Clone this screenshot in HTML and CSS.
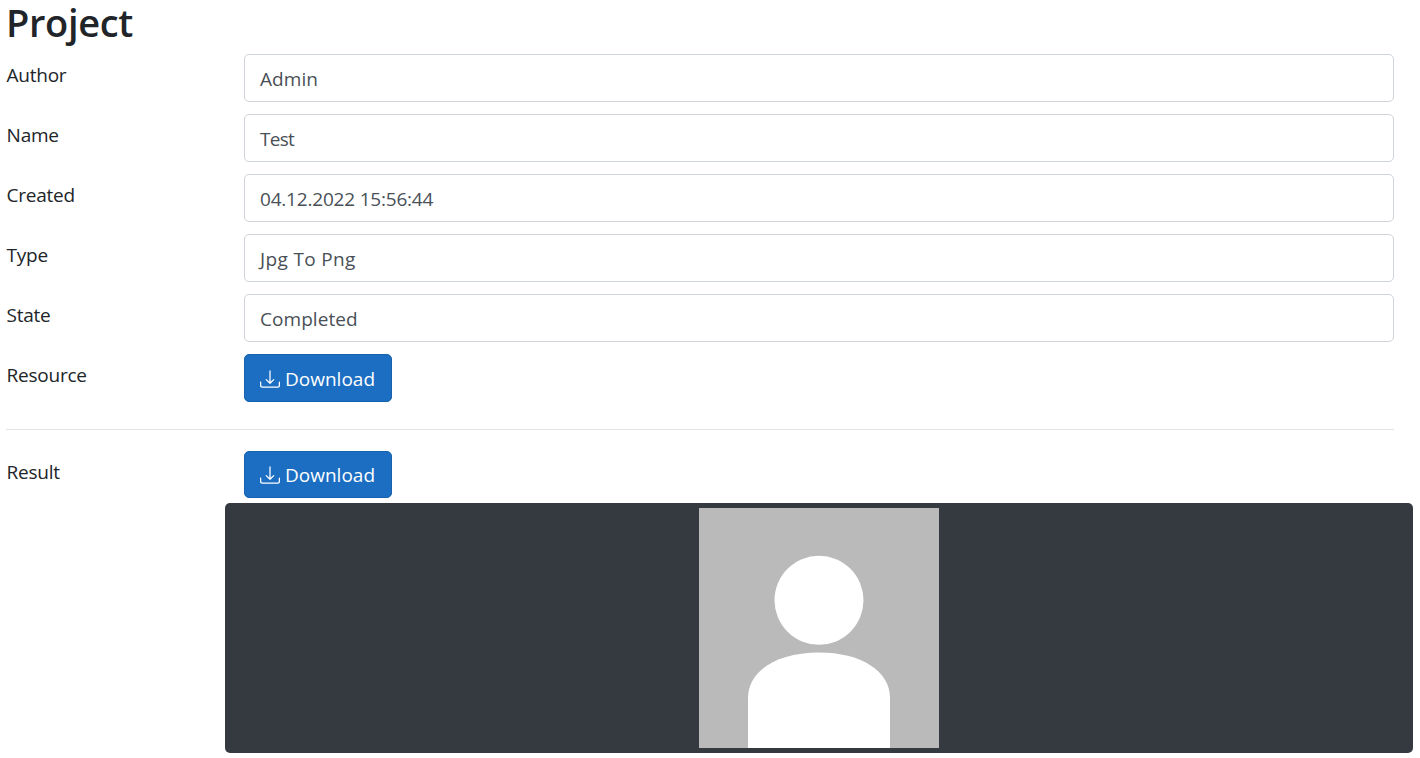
FILE: index.html
```html
<!DOCTYPE html>
<html lang="en">
<head>
<meta charset="utf-8">
<title>Project</title>
<link rel="stylesheet" href="styles.css">
</head>
<body>
<svg class="defs" aria-hidden="true">
  <symbol id="download" viewBox="0 0 16 16">
    <path d="M.5 9.9a.5.5 0 0 1 .5.5v2.5a1 1 0 0 0 1 1h12a1 1 0 0 0 1-1v-2.5a.5.5 0 0 1 1 0v2.5a2 2 0 0 1-2 2H2a2 2 0 0 1-2-2v-2.5a.5.5 0 0 1 .5-.5z"/>
    <path d="M7.646 11.854a.5.5 0 0 0 .708 0l3-3a.5.5 0 0 0-.708-.708L8.5 10.293V1.500a.5.5 0 0 0-1 0v8.793L5.354 8.146a.5.5 0 1 0-.708.708l3 3z"/>
  </symbol>
</svg>
<main class="page">
  <h1 class="title">Project</h1>
  <div class="row"><div class="label">Author</div><div class="field">Admin</div></div>
  <div class="row"><div class="label">Name</div><div class="field test">Test</div></div>
  <div class="row"><div class="label">Created</div><div class="field date">04.12.2022 15:56:44</div></div>
  <div class="row"><div class="label">Type</div><div class="field jpg">Jpg To Png</div></div>
  <div class="row"><div class="label">State</div><div class="field">Completed</div></div>
  <div class="row"><div class="label">Resource</div><a class="button"><svg class="icon"><use href="#download"/></svg><span class="caption">Download</span></a></div>
  <hr class="rule">
  <div class="row result-row"><div class="label">Result</div><a class="button"><svg class="icon"><use href="#download"/></svg><span class="caption">Download</span></a></div>
  <div class="preview">
    <svg class="avatar" viewBox="0 0 240 240">
      <rect width="240" height="240" fill="#bababa"/>
      <circle cx="120" cy="92.3" r="44.5" fill="#fff"/>
      <path d="M49 240v-50C49 163 78 144.500 120 144.500S191 163 191 190v50z" fill="#fff"/>
    </svg>
  </div>
</main>
</body>
</html>
```
FILE: styles.css
```css
* { box-sizing: border-box; }
body {
  margin: 0;
  background: #fff;
  color: #212529;
  font: 400 19px/30px "Open Sans", "Noto Sans", sans-serif;
}
.defs { display: block; width: 0; height: 0; }
.page { padding: 0 7px 0 6px; }
.title {
  margin: 0 0 10px;
  font-size: 38px;
  line-height: 44px;
  font-weight: 600;
  letter-spacing: -0.35px;
}
.row {
  display: grid;
  grid-template-columns: 238px 1150px;
  grid-template-rows: 48px;
  height: 48px;
  margin-bottom: 12px;
}
.label { padding: 6px 0 0 0.6px; letter-spacing: -0.25px; }
.field {
  padding: 9px 15px 7px;
  border: 1px solid #ced4da;
  border-radius: 5px;
  color: #495057;
  letter-spacing: 0.05px;
}
.test { letter-spacing: -0.7px; }
.date { letter-spacing: -0.2px; }
.jpg { letter-spacing: 0.35px; }
.button {
  display: flex;
  align-items: center;
  width: 148px;
  height: 48px;
  padding: 2px 15px 0;
  border: 1px solid #1861ac;
  border-radius: 5px;
  background: #1b6ec2;
  color: #fff;
}
.icon { width: 20px; height: 20px; margin-right: 5px; fill: currentColor; }
.caption { letter-spacing: 0; }
.rule { width: 1388px; margin: 27px 0 21px; border: 0; border-top: 1px solid #e3e3e3; }
.result-row { grid-template-rows: 47px; height: 47px; margin-bottom: 5px; }
.result-row .button { height: 47px; padding-top: 0; }
.preview {
  display: flex;
  justify-content: center;
  width: 1188px;
  height: 250px;
  margin-left: 219px;
  padding: 5px;
  border-radius: 5px;
  background: #343a40;
}
.avatar { display: block; width: 240px; height: 240px; }
```
